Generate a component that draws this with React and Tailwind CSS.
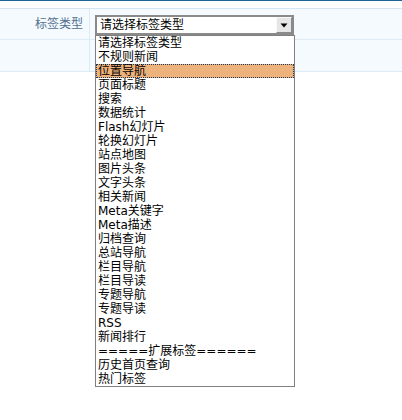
import React from "react";

const items = [
  "请选择标签类型",
  "不规则新闻",
  "位置导航",
  "页面标题",
  "搜索",
  "数据统计",
  "Flash幻灯片",
  "轮换幻灯片",
  "站点地图",
  "图片头条",
  "文字头条",
  "相关新闻",
  "Meta关键字",
  "Meta描述",
  "归档查询",
  "总站导航",
  "栏目导航",
  "栏目导读",
  "专题导航",
  "专题导读",
  "RSS",
  "新闻排行",
  "=====扩展标签======",
  "历史首页查询",
  "热门标签",
];

export default function App() {
  return (
    <div
      className="relative w-[402px] h-[420px] bg-white overflow-hidden"
      style={{ fontFamily: '"DejaVu Sans", "Noto Sans CJK SC", sans-serif' }}
    >
      <div className="h-[1px] bg-[#1c6396]" />
      <div className="h-[7px] bg-white" />
      <div className="border-t border-[#d3e5f2] bg-[#f5fafe]">
        <div className="flex h-[31px] border-b border-[#dcebf6]">
          <div className="w-[90px] border-r border-[#dcebf6] flex items-center justify-end pr-[6px] text-[12px] text-[#52708f]">
            标签类型
          </div>
          <div className="flex-1 pl-[5px] pt-[6px]">
            <div className="w-[199px] h-[20px] border-2 border-[#8a8a8a] bg-white flex items-center">
              <span className="flex-1 pl-[3px] text-[12px] leading-[16px] text-black">
                请选择标签类型
              </span>
              <div className="w-[16px] h-[16px] bg-[#e6e6e6] border border-[#fafafa] border-r-[#8a8a8a] border-b-[#8a8a8a] flex items-center justify-center">
                <svg width="8" height="5" viewBox="0 0 8 5">
                  <path d="M0.5 0.5 H7.5 L4 4.5 Z" fill="#000" />
                </svg>
              </div>
            </div>
          </div>
        </div>
        <div className="flex h-[32px] border-b border-[#dcebf6]">
          <div className="w-[90px] border-r border-[#dcebf6]" />
          <div className="flex-1" />
        </div>
      </div>

      <div className="absolute left-[95px] top-[35px] w-[200px] border border-[#808080] bg-white">
        {items.map((t, i) => (
          <div
            key={i}
            className={
              i === 2
                ? "h-[14px] leading-[13px] text-[12px] text-black pl-[1px] bg-[#eeb27d] border border-dotted border-[#1e3a5a] whitespace-nowrap"
                : "h-[14px] leading-[14px] text-[12px] text-black pl-[2px] whitespace-nowrap"
            }
          >
            {t}
          </div>
        ))}
      </div>
    </div>
  );
}
